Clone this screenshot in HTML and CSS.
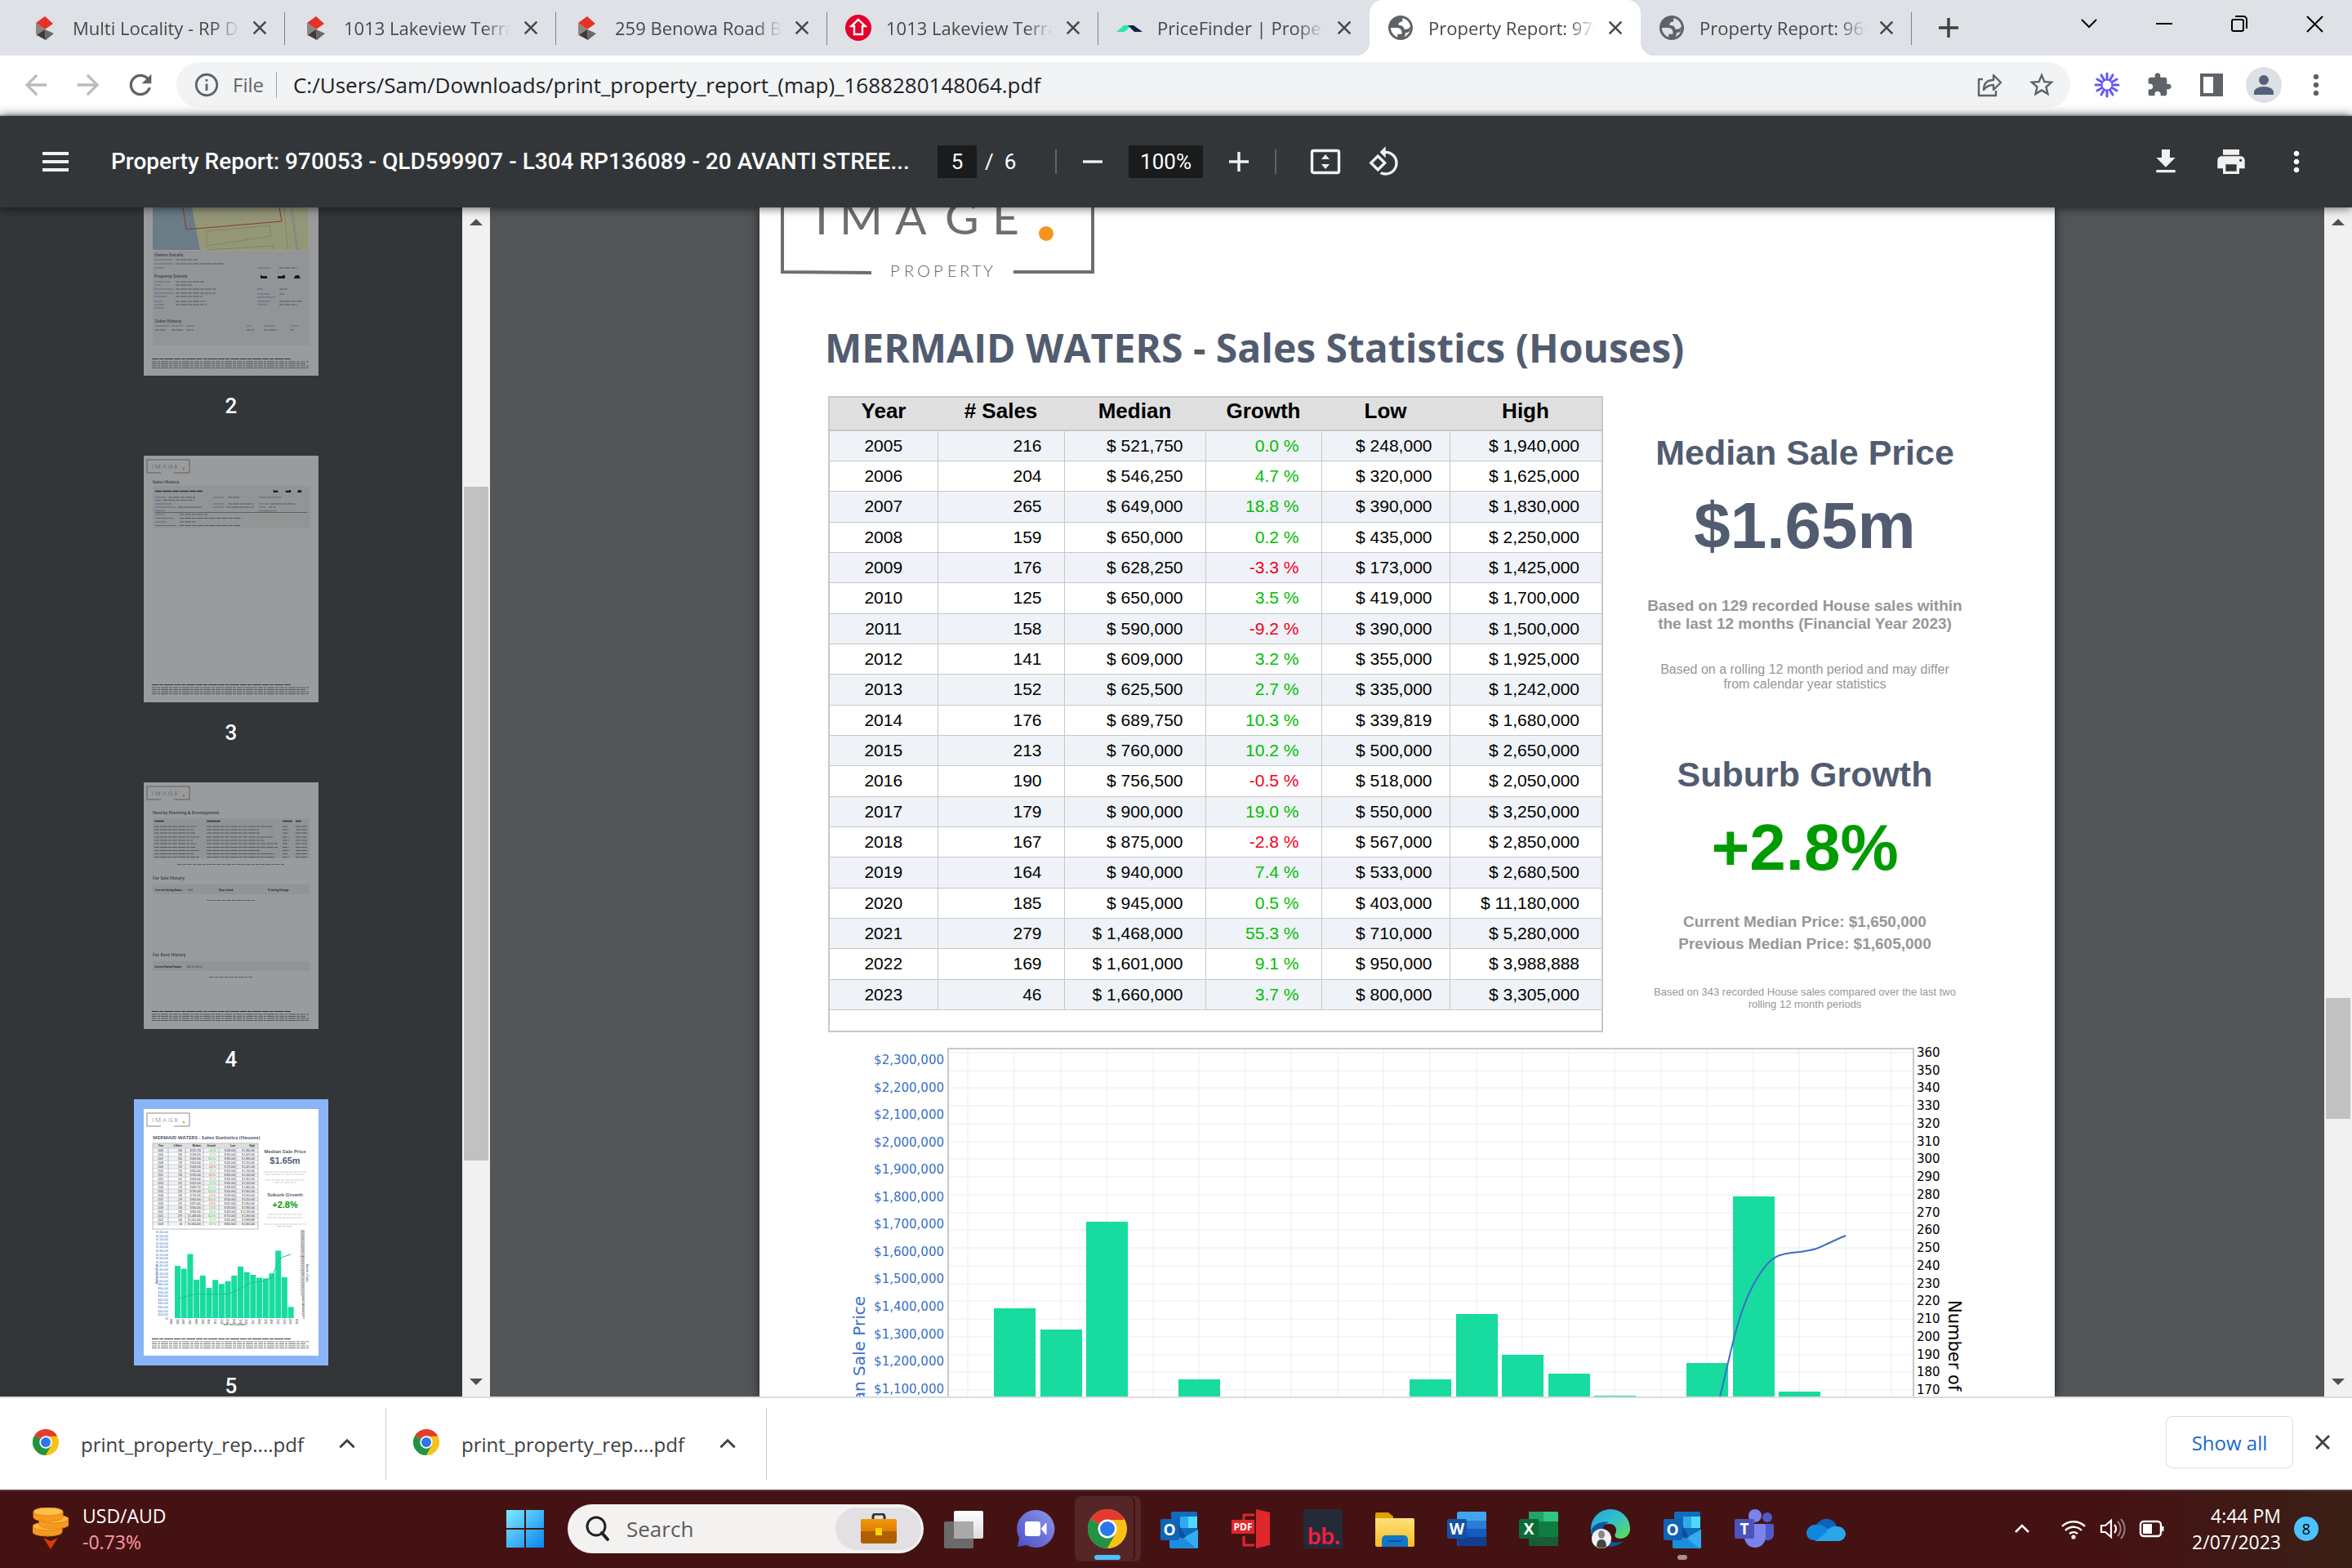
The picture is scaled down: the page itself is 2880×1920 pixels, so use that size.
FILE: index.html
```html
<!DOCTYPE html>
<html lang="en">
<head>
<meta charset="utf-8">
<title>Property Report</title>
<link rel="stylesheet" href="styles.css">
</head>
<body>
<svg class="sprite" aria-hidden="true">
  <defs>
    <linearGradient id="g-win" x1="0" y1="0" x2="1" y2="1"><stop offset="0" stop-color="#7eebff"/><stop offset="1" stop-color="#0a84f0"/></linearGradient>
    <linearGradient id="g-case" x1="0" y1="0" x2="0" y2="1"><stop offset="0" stop-color="#f09a0c"/><stop offset="1" stop-color="#e07d00"/></linearGradient>
    <linearGradient id="g-chat" x1="1" y1="0" x2="0" y2="1"><stop offset="0" stop-color="#8f97ee"/><stop offset="1" stop-color="#4a4fc4"/></linearGradient>
    <linearGradient id="g-folder" x1="0" y1="0" x2="0" y2="1"><stop offset="0" stop-color="#ffe07a"/><stop offset="1" stop-color="#f9bd23"/></linearGradient>
    <linearGradient id="g-edge" x1="0" y1="0" x2="1" y2="1"><stop offset="0" stop-color="#1fa7e0"/><stop offset=".5" stop-color="#35c1c8"/><stop offset="1" stop-color="#66e04a"/></linearGradient>
    <linearGradient id="g-white" x1="0" y1="0" x2="0" y2="1"><stop offset="0" stop-color="#fff"/><stop offset="1" stop-color="#dcdcdc"/></linearGradient>
  </defs>
  <symbol id="i-rp" viewBox="0 0 32 32"><path d="M16 2l10 9-10 7L5 10z" fill="#e63227"/><path d="M5 10l11 8-10 8-1-3z" fill="#8a8685"/><path d="M16 18l-10 7 11 6z" fill="#3d3a39"/><path d="M16 18l11 5-10 8z" fill="#6d6968"/></symbol>
  <symbol id="i-rea" viewBox="0 0 32 32"><circle cx="16" cy="16" r="16" fill="#e4002b"/><path d="M16 6l8.500 8h-3.500v10H11V14H7.500z" fill="none" stroke="#fff" stroke-width="2.400"/></symbol>
  <symbol id="i-pf" viewBox="0 0 32 32"><path d="M0 21L9 13h10l-9 8z" fill="#2ee6a8"/><path d="M14 13h7l11 8H22z" fill="#0f2548"/></symbol>
  <symbol id="i-globe" viewBox="0 0 24 24"><path fill="#5f6368" d="M12 2C6.480 2 2 6.480 2 12s4.480 10 10 10 10-4.480 10-10S17.520 2 12 2zM4 12h4.400c3.400 0 4.900 1.700 4.600 5.100H9.500v2.500C6.300 18.500 4 15.500 4 12zm10.800 7.500c.9-1 1.200-2.300 1.200-3.500 3 0 3.600-1 3.600-3h.3c-.4 3.100-2.400 5.500-5.100 6.500zM20 11c-1 2-3.500 2.400-5.100 2.200-.3-2.500-1.900-3.100-4.500-3.200-.3-2.400 1.300-3 3.100-3V4.200C17 4.800 19.500 7.500 20 11z"/></symbol>
  <symbol id="i-x" viewBox="0 0 24 24"><path d="M4 4l16 16M20 4L4 20" fill="none" stroke="currentColor" stroke-width="2.800"/></symbol>
  <symbol id="i-back" viewBox="0 0 24 24"><path fill="currentColor" d="M20 11H7.830l5.590-5.590L12 4l-8 8 8 8 1.410-1.410L7.830 13H20v-2z"/></symbol>
  <symbol id="i-fwd" viewBox="0 0 24 24"><path fill="currentColor" d="M4 11h12.170l-5.590-5.590L12 4l8 8-8 8-1.410-1.410L16.170 13H4v-2z"/></symbol>
  <symbol id="i-reload" viewBox="0 0 24 24"><path fill="currentColor" d="M17.650 6.350C16.200 4.900 14.210 4 12 4c-4.420 0-7.990 3.580-7.990 8s3.570 8 7.990 8c3.730 0 6.840-2.550 7.730-6h-2.080c-.82 2.330-3.040 4-5.650 4-3.310 0-6-2.690-6-6s2.690-6 6-6c1.660 0 3.140.69 4.220 1.780L13 11h7V4l-2.350 2.350z"/></symbol>
  <symbol id="i-info" viewBox="0 0 24 24"><path fill="currentColor" d="M11 17h2v-6h-2v6zm1-15C6.480 2 2 6.480 2 12s4.480 10 10 10 10-4.480 10-10S17.520 2 12 2zm0 18c-4.410 0-8-3.590-8-8s3.590-8 8-8 8 3.590 8 8-3.590 8-8 8zM11 9h2V7h-2v2z"/></symbol>
  <symbol id="i-share" viewBox="0 0 32 32"><path fill="none" stroke="currentColor" stroke-width="2.400" d="M8 9H3v20h21v-6M9 22c0-8 4-12 12-12V4l9 9-9 9v-6c-6 0-9 2-12 6z" stroke-linejoin="round"/></symbol>
  <symbol id="i-star" viewBox="0 0 24 24"><path fill="currentColor" d="M22 9.240l-7.190-.62L12 2 9.190 8.630 2 9.240l5.460 4.730L5.820 21 12 17.270 18.180 21l-1.630-7.030L22 9.240zM12 15.400l-3.760 2.270 1-4.280-3.320-2.880 4.380-.38L12 6.100l1.710 4.040 4.380.38-3.320 2.880 1 4.280L12 15.400z"/></symbol>
  <symbol id="i-burst" viewBox="0 0 32 32"><g stroke="#6558f5" stroke-width="3" stroke-linecap="round"><path d="M16 2v7M16 23v7M2 16h7M23 16h7M9 3.900l3.500 6M19.500 22.100l3.500 6M3.900 9l6 3.500M22.100 19.500l6 3.500M3.900 23l6-3.500M22.100 12.500l6-3.500M9 28.100l3.500-6M19.500 9.900l3.500-6"/></g><circle cx="16" cy="16" r="6.500" fill="none" stroke="#6558f5" stroke-width="2"/></symbol>
  <symbol id="i-ext" viewBox="0 0 24 24"><path fill="currentColor" d="M20.500 11H19V7c0-1.100-.9-2-2-2h-4V3.500C13 2.120 11.880 1 10.500 1S8 2.120 8 3.500V5H4c-1.100 0-1.990.9-1.990 2v3.800H3.500c1.490 0 2.700 1.210 2.700 2.700s-1.210 2.700-2.700 2.700H2V20c0 1.100.9 2 2 2h3.800v-1.500c0-1.490 1.210-2.700 2.700-2.700 1.490 0 2.700 1.210 2.700 2.700V22H17c1.100 0 2-.9 2-2v-4h1.500c1.380 0 2.500-1.120 2.500-2.500S21.880 11 20.500 11z"/></symbol>
  <symbol id="i-panel" viewBox="0 0 32 32"><path fill="currentColor" fill-rule="evenodd" d="M2 2h28v28H2zM6 6v20h12V6z"/></symbol>
  <symbol id="i-person" viewBox="0 0 48 48"><circle cx="24" cy="24" r="22" fill="#dde0e6"/><circle cx="24" cy="18" r="6" fill="#53627a"/><path d="M12 36v-3c0-4 5-7 12-7s12 3 12 7v3z" fill="#53627a"/></symbol>
  <symbol id="i-dots" viewBox="0 0 24 24"><path fill="currentColor" d="M12 8c1.100 0 2-.9 2-2s-.9-2-2-2-2 .9-2 2 .9 2 2 2zm0 2c-1.100 0-2 .9-2 2s.9 2 2 2 2-.9 2-2-.9-2-2-2zm0 6c-1.100 0-2 .9-2 2s.9 2 2 2 2-.9 2-2-.9-2-2-2z"/></symbol>
  <symbol id="i-up" viewBox="0 0 24 24"><path d="M4 16l8-8 8 8" fill="none" stroke="currentColor" stroke-width="2.600"/></symbol>
  <symbol id="i-chrome" viewBox="0 0 48 48"><circle cx="24" cy="24" r="24" fill="#fbc116"/><path d="M24 24L3.200 12A24 24 0 0 1 44.800 12z" fill="#e33b2e"/><path d="M3.200 12A24 24 0 0 0 24 48L34.400 30 24 24z" fill="#229342"/><path d="M24 13h20.800A24 24 0 0 1 24 48l10-18z" fill="#fbc116"/><circle cx="24" cy="24" r="11.500" fill="#fff"/><circle cx="24" cy="24" r="9" fill="#2b76ea"/></symbol>
  <symbol id="i-outlook" viewBox="0 0 48 48"><rect x="14" y="3" width="32" height="30" rx="2" fill="#0f6cbd"/><rect x="14" y="9" width="11" height="14" fill="#1468b8"/><rect x="25" y="9" width="10" height="14" fill="#32a9ee"/><rect x="35" y="9" width="11" height="14" fill="#50d9ff"/><path d="M12 26l17 9 18-10v21a2 2 0 0 1-2 2H14a2 2 0 0 1-2-2z" fill="#1c8fdc"/><path d="M47 25v21a2 2 0 0 1-2 2L29 35z" fill="#33adf0"/><path d="M24 20l8 14-4 2-6-3z" fill="#0b4f9c"/><rect x="1" y="12" width="23" height="26" rx="2" fill="#0f64b8"/><text x="12" y="32" class="tile-letter">O</text></symbol>
  <symbol id="t-logo" viewBox="0 0 54 18"><path d="M18 17H1V1h52v16H34" fill="none" stroke="#888" stroke-width="1"/><text x="7" y="12" class="mini mini-logo">I M A G E</text><circle cx="46" cy="12" r="1.200" fill="#f7941d"/></symbol>
  <symbol id="t-foot" viewBox="0 0 194 14"><path d="M0 1.500h171" stroke="#333" stroke-width="1.200" stroke-dasharray="8 1 5 1 11 1"/><path d="M0 5h193M0 7.500h188M0 10h193M0 12.500h193" stroke="#777" stroke-width="1" stroke-dasharray="6 1 3 1 9 1 4 1"/></symbol>
  <symbol id="t-beds" viewBox="0 0 56 6"><path d="M1 0v5h8V2H3zM22 2v3h9V1h-3v1zM42 4l2-3h4l2 4h-8z" fill="#000"/></symbol>
</svg>

<header class="tabs">
  <div class="tab"><svg class="ic32"><use href="#i-rp"/></svg><span class="tab-title">Multi Locality - RP Data</span><button class="tab-x" aria-label="Close tab"><svg><use href="#i-x"/></svg></button></div>
  <div class="tab"><svg class="ic32"><use href="#i-rp"/></svg><span class="tab-title">1013 Lakeview Terrace</span><button class="tab-x" aria-label="Close tab"><svg><use href="#i-x"/></svg></button></div>
  <div class="tab"><svg class="ic32"><use href="#i-rp"/></svg><span class="tab-title">259 Benowa Road Benowa</span><button class="tab-x" aria-label="Close tab"><svg><use href="#i-x"/></svg></button></div>
  <div class="tab"><svg class="ic32"><use href="#i-rea"/></svg><span class="tab-title">1013 Lakeview Terrace</span><button class="tab-x" aria-label="Close tab"><svg><use href="#i-x"/></svg></button></div>
  <div class="tab tab-before"><svg class="ic32"><use href="#i-pf"/></svg><span class="tab-title">PriceFinder | Property</span><button class="tab-x" aria-label="Close tab"><svg><use href="#i-x"/></svg></button></div>
  <div class="tab tab-active"><svg class="ic32 globe"><use href="#i-globe"/></svg><span class="tab-title">Property Report: 970053</span><button class="tab-x" aria-label="Close tab"><svg><use href="#i-x"/></svg></button></div>
  <div class="tab"><svg class="ic32 globe"><use href="#i-globe"/></svg><span class="tab-title">Property Report: 969</span><button class="tab-x" aria-label="Close tab"><svg><use href="#i-x"/></svg></button></div>
  <button class="new-tab" aria-label="New tab"><svg viewBox="0 0 24 24"><path d="M12 0v24M0 12h24" stroke="#3c4043" stroke-width="3.400"/></svg></button>
  <div class="win">
    <button aria-label="Search tabs"><svg viewBox="0 0 24 24"><path d="M3 7l9 9 9-9" fill="none" stroke="#000" stroke-width="2"/></svg></button>
    <button aria-label="Minimize"><svg viewBox="0 0 24 24"><path d="M2 12h20" stroke="#000" stroke-width="2"/></svg></button>
    <button aria-label="Restore"><svg viewBox="0 0 24 24"><path d="M3 9a2 2 0 0 1 2-2h10a2 2 0 0 1 2 2v10a2 2 0 0 1-2 2H5a2 2 0 0 1-2-2zM7 3h10a4 4 0 0 1 4 4v11" fill="none" stroke="#000" stroke-width="2"/></svg></button>
    <button aria-label="Close"><svg viewBox="0 0 24 24"><path d="M3 3l19 19M22 3L3 22" stroke="#000" stroke-width="2"/></svg></button>
  </div>
</header>

<nav class="toolbar">
  <button class="nav-btn off" aria-label="Back"><svg><use href="#i-back"/></svg></button>
  <button class="nav-btn off" aria-label="Forward"><svg><use href="#i-fwd"/></svg></button>
  <button class="nav-btn" aria-label="Reload"><svg><use href="#i-reload"/></svg></button>
  <div class="omnibox">
    <svg class="info"><use href="#i-info"/></svg>
    <label class="scheme" for="url">File</label>
    <input id="url" class="url" type="text" value="C:/Users/Sam/Downloads/print_property_report_(map)_1688280148064.pdf">
    <button class="omni-btn" aria-label="Share"><svg><use href="#i-share"/></svg></button>
    <button class="omni-btn star" aria-label="Bookmark"><svg><use href="#i-star"/></svg></button>
  </div>
  <div class="ext">
    <button aria-label="Loom"><svg><use href="#i-burst"/></svg></button>
    <button aria-label="Extensions"><svg><use href="#i-ext"/></svg></button>
    <button aria-label="Side panel"><svg><use href="#i-panel"/></svg></button>
    <button class="avatar" aria-label="Profile"><svg><use href="#i-person"/></svg></button>
    <button class="more" aria-label="Menu"><svg><use href="#i-dots"/></svg></button>
  </div>
</nav>

<section class="pdfbar">
  <button class="burger" aria-label="Menu"><svg viewBox="0 0 32 24"><path d="M0 2h32M0 12h32M0 22h32" stroke="#f1f1f1" stroke-width="4"/></svg></button>
  <h1 class="doc-title">Property Report: 970053 - QLD599907 - L304 RP136089 - 20 AVANTI STREE...</h1>
  <input class="page-no" type="text" value="5" aria-label="Page number">
  <span class="page-of">/&nbsp; 6</span>
  <span class="rule"></span>
  <button class="sign" aria-label="Zoom out"><svg viewBox="0 0 24 24"><path d="M0 12h24" stroke="#f1f1f1" stroke-width="3.400"/></svg></button>
  <input class="zoom" type="text" value="100%" aria-label="Zoom">
  <button class="sign" aria-label="Zoom in"><svg viewBox="0 0 24 24"><path d="M0 12h24M12 0v24" stroke="#f1f1f1" stroke-width="3.400"/></svg></button>
  <span class="rule"></span>
  <button class="tool" aria-label="Fit to page"><svg viewBox="0 0 40 40"><rect x="3.500" y="6.500" width="33" height="27" rx="2" fill="none" stroke="#f1f1f1" stroke-width="3.400"/><path d="M20 11l5 6H15zM20 29l5-6H15z" fill="#f1f1f1"/></svg></button>
  <button class="tool" aria-label="Rotate"><svg viewBox="0 0 24 24"><path fill="#f1f1f1" d="M7.340 6.410L.86 12.900l6.490 6.480 6.490-6.480-6.500-6.490zM3.690 12.900l3.660-3.660L11 12.900l-3.660 3.660-3.650-3.660zm15.670-6.260C17.610 4.880 15.300 4 13 4V.76L8.760 5 13 9.240V6c1.790 0 3.580.68 4.950 2.050 2.730 2.730 2.730 7.170 0 9.900C16.580 19.320 14.790 20 13 20c-.97 0-1.940-.21-2.840-.61l-1.490 1.490C10.020 21.620 11.510 22 13 22c2.300 0 4.610-.88 6.360-2.640 3.520-3.510 3.520-9.210 0-12.720z"/></svg></button>
  <div class="pdf-right">
    <button class="tool" aria-label="Download"><svg viewBox="0 0 24 24"><path fill="#f1f1f1" d="M19 9h-4V3H9v6H5l7 7 7-7zM5 18v2h14v-2H5z"/></svg></button>
    <button class="tool" aria-label="Print"><svg viewBox="0 0 24 24"><path fill="#f1f1f1" d="M19 8H5c-1.660 0-3 1.340-3 3v6h4v4h12v-4h4v-6c0-1.660-1.340-3-3-3zm-3 11H8v-5h8v5zm3-7c-.55 0-1-.45-1-1s.45-1 1-1 1 .45 1 1-.45 1-1 1zm-1-9H6v4h12V3z"/></svg></button>
    <button class="tool light" aria-label="More"><svg><use href="#i-dots"/></svg></button>
  </div>
</section>

<main class="viewer">
  <aside class="thumbs">
    <figure class="thumb">
      <svg class="sheet" viewBox="0 0 214 206" width="214" height="206">
        <rect width="214" height="206" fill="#fff"/>
        <rect x="11" width="190" height="52" fill="#f6f7b4"/><path d="M11 0h48l10 52H11z" fill="#a2c2d2"/>
        <path d="M48 0l4 27 117-10-3-17" fill="none" stroke="#d33" stroke-width="1"/><path d="M77 29l77-7 2 13-79 12zM172 0l4 52M77 52l81-5v5" fill="none" stroke="#cccf98"/><path d="M181 0l7 52" stroke="#dadada" stroke-width="3"/>
        <rect x="11" y="53" width="192" height="116" fill="#f2f2f2"/>
        <text x="13" y="60" class="mini mini-h">Owner Details</text><text x="13" y="86" class="mini mini-h">Property Details</text><text x="14" y="141" class="mini mini-h">Sales History</text>
        <path d="M13 64h22M13 69h22M13 74h12M139 74h17M13 91h20M13 95h8M13 100h24M13 105h24M13 109h15M13 115h10M13 119h12M13 123h12M139 100h7M139 106h16M139 110h22M139 115h16M139 119h12M14 145h17M34 145h14M52 145h10M126 145h6M147 145h14M180 145h10" stroke="#8c9dc8" stroke-width="1"/>
        <path d="M39 64h27M39 69h60M166 74h22M39 91h36M39 95h21M39 100h51M39 105h49M39 109h33M39 115h37M39 119h38M166 100h10M166 106h7M166 115h28M166 119h22M14 150h13M34 150h15M52 150h9M126 150h9M147 150h17M180 150h4" stroke="#777" stroke-width="1" stroke-dasharray="5 1 8 1"/>
        <use href="#t-beds" x="142" y="82" width="56" height="6"/>
        <use href="#t-foot" x="10" y="184" width="194" height="14"/>
      </svg>
      <figcaption>2</figcaption>
    </figure>
    <figure class="thumb">
      <svg class="sheet" viewBox="0 0 214 302" width="214" height="302">
        <rect width="214" height="302" fill="#fff"/>
        <use href="#t-logo" x="3" y="3" width="54" height="20"/>
        <text x="11" y="34" class="mini mini-h">Sales History</text>
        <rect x="11" y="37" width="193" height="52" fill="#f2f2f2"/>
        <path d="M14 43.500h58" stroke="#333" stroke-width="1.500" stroke-dasharray="8 1 11 1"/>
        <path d="M14 51h14M14 54.500h7M14 59h20M14 63h25M14 67.500h12M14 72h12M14 76.500h22M14 81h14M14 85.500h26M85 51h13M85 59h14M85 63h14M141 51h28M141 59h12M141 63h8M141 67.500h22" stroke="#8c9dc8" stroke-width="1"/>
        <path d="M30 51h33M24 54.500h38M42 63h30M44 72h34M44 76.500h76M44 81h20M44 85.500h74M103 51h15M103 59h32M101 63h34M155 59h31M153 63h9" stroke="#777" stroke-width="1" stroke-dasharray="5 1 8 1"/>
        <path d="M14 69.500h186" stroke="#888" stroke-width="1"/>
        <use href="#t-beds" x="158" y="41" width="40" height="5"/>
        <use href="#t-foot" x="10" y="279" width="194" height="14"/>
      </svg>
      <figcaption>3</figcaption>
    </figure>
    <figure class="thumb">
      <svg class="sheet" viewBox="0 0 214 302" width="214" height="302">
        <rect width="214" height="302" fill="#fff"/>
        <use href="#t-logo" x="3" y="3" width="54" height="20"/>
        <text x="11" y="39" class="mini mini-h">Nearby Planning &amp; Development</text>
        <rect x="11" y="44" width="192" height="49" fill="#f0f0f0"/>
        <path d="M13 47.500h12M77 47.500h17M170 47.500h12M186 47.500h7" stroke="#333" stroke-width="1.500"/>
        <path d="M13 54h52M13 58h48M13 62h50M13 67h55M13 71h47M13 75h52M13 79.500h50M13 83.500h55M13 87.500h48M13 91.500h55M77 54h81M77 58h64M77 62h66M77 67h81M77 71h70M77 75h87M77 79.500h88M77 83.500h66M77 87.500h84M77 91.500h84M170 54h7M170 58h8M170 62h7M170 67h8M170 71h8M170 75h7M170 79.500h8M170 83.500h8M170 87.500h7M170 91.500h8M186 54h14M186 58h14M186 62h14M186 67h14M186 71h14M186 75h14M186 79.500h14M186 83.500h14M186 87.500h14M186 91.500h14" stroke="#777" stroke-width="1" stroke-dasharray="6 1 9 1 4 1"/>
        <path d="M41 100.500h132M77 144.500h59M80 238.500h53" stroke="#888" stroke-width="1" stroke-dasharray="6 1 4 1"/>
        <text x="11" y="119" class="mini mini-h">For Sale History</text>
        <rect x="11" y="125" width="192" height="12" fill="#f0f0f0"/>
        <text x="14" y="133" class="mini mini-b">Current Listing Status:</text><text x="54" y="133" class="mini mini-r">Sold</text><text x="92" y="133" class="mini mini-b">Days Listed:</text><text x="152" y="133" class="mini mini-b">% Listing Change:</text>
        <text x="11" y="213" class="mini mini-h">For Rent History</text>
        <rect x="11" y="219" width="192" height="12" fill="#f0f0f0"/>
        <text x="13" y="227" class="mini mini-b">Current Rental Status:</text><text x="53" y="227" class="mini mini-r">Not For Rent</text>
        <use href="#t-foot" x="10" y="279" width="194" height="14"/>
      </svg>
      <figcaption>4</figcaption>
    </figure>
    <figure class="thumb thumb-on">
      <svg class="sheet" id="mini" viewBox="0 0 214 302" width="214" height="302">
        <rect width="214" height="302" fill="#fff"/>
        <use href="#t-logo" x="3" y="3" width="54" height="20"/>
        <text x="11" y="37" class="mini mini-t">MERMAID WATERS - Sales Statistics (Houses)</text>
        <text x="173" y="54" class="mini mini-s">Median Sale Price</text><text x="173" y="67" class="mini mini-n">$1.65m</text>
        <text x="173" y="107" class="mini mini-s">Suburb Growth</text><text x="173" y="121" class="mini mini-n up">+2.8%</text>
        <path d="M147 77h52M149 80h48M149 87h48M160 90h26M152 129h42M151 133h44M147 141h52M163 143.500h20" stroke="#ccc" stroke-width="1" stroke-dasharray="6 1 4 1"/>
        <use href="#t-foot" x="10" y="280" width="194" height="14"/>
      </svg>
      <figcaption>5</figcaption>
    </figure>
  </aside>
  <div class="scroll scroll-thumbs"><i class="arrow-up"></i><i class="grip"></i><i class="arrow-down"></i></div>

  <div class="stage">
    <article class="page">
      <svg class="logo" viewBox="0 0 390 90" width="390" height="90" role="img" aria-label="Image Property">
        <path d="M2 0v79l109 1M285 79h97V0" fill="none" stroke="#6d6e70" stroke-width="4"/>
        <text class="logo-a" y="33" x="42 72 140 201 259">IMAGE</text>
        <circle cx="325" cy="32" r="9" fill="#f7941d"/>
        <text class="logo-b" y="85" x="134 151 167 187 204 219 234 248">PROPERTY</text>
      </svg>
      <h2 class="heading">MERMAID WATERS - Sales Statistics (Houses)</h2>
      <div class="cols">
        <table class="stats" id="stats">
          <colgroup><col class="c1"><col class="c2"><col class="c3"><col class="c4"><col class="c5"><col class="c6"></colgroup>
          <thead><tr><th>Year</th><th># Sales</th><th>Median</th><th>Growth</th><th>Low</th><th>High</th></tr></thead>
          <tbody>
            <tr><td>2005</td><td>216</td><td>$ 521,750</td><td>0.0 %</td><td>$ 248,000</td><td>$ 1,940,000</td></tr>
            <tr><td>2006</td><td>204</td><td>$ 546,250</td><td>4.7 %</td><td>$ 320,000</td><td>$ 1,625,000</td></tr>
            <tr><td>2007</td><td>265</td><td>$ 649,000</td><td>18.8 %</td><td>$ 390,000</td><td>$ 1,830,000</td></tr>
            <tr><td>2008</td><td>159</td><td>$ 650,000</td><td>0.2 %</td><td>$ 435,000</td><td>$ 2,250,000</td></tr>
            <tr><td>2009</td><td>176</td><td>$ 628,250</td><td class="neg">-3.3 %</td><td>$ 173,000</td><td>$ 1,425,000</td></tr>
            <tr><td>2010</td><td>125</td><td>$ 650,000</td><td>3.5 %</td><td>$ 419,000</td><td>$ 1,700,000</td></tr>
            <tr><td>2011</td><td>158</td><td>$ 590,000</td><td class="neg">-9.2 %</td><td>$ 390,000</td><td>$ 1,500,000</td></tr>
            <tr><td>2012</td><td>141</td><td>$ 609,000</td><td>3.2 %</td><td>$ 355,000</td><td>$ 1,925,000</td></tr>
            <tr><td>2013</td><td>152</td><td>$ 625,500</td><td>2.7 %</td><td>$ 335,000</td><td>$ 1,242,000</td></tr>
            <tr><td>2014</td><td>176</td><td>$ 689,750</td><td>10.3 %</td><td>$ 339,819</td><td>$ 1,680,000</td></tr>
            <tr><td>2015</td><td>213</td><td>$ 760,000</td><td>10.2 %</td><td>$ 500,000</td><td>$ 2,650,000</td></tr>
            <tr><td>2016</td><td>190</td><td>$ 756,500</td><td class="neg">-0.5 %</td><td>$ 518,000</td><td>$ 2,050,000</td></tr>
            <tr><td>2017</td><td>179</td><td>$ 900,000</td><td>19.0 %</td><td>$ 550,000</td><td>$ 3,250,000</td></tr>
            <tr><td>2018</td><td>167</td><td>$ 875,000</td><td class="neg">-2.8 %</td><td>$ 567,000</td><td>$ 2,850,000</td></tr>
            <tr><td>2019</td><td>164</td><td>$ 940,000</td><td>7.4 %</td><td>$ 533,000</td><td>$ 2,680,500</td></tr>
            <tr><td>2020</td><td>185</td><td>$ 945,000</td><td>0.5 %</td><td>$ 403,000</td><td>$ 11,180,000</td></tr>
            <tr><td>2021</td><td>279</td><td>$ 1,468,000</td><td>55.3 %</td><td>$ 710,000</td><td>$ 5,280,000</td></tr>
            <tr><td>2022</td><td>169</td><td>$ 1,601,000</td><td>9.1 %</td><td>$ 950,000</td><td>$ 3,988,888</td></tr>
            <tr><td>2023</td><td>46</td><td>$ 1,660,000</td><td>3.7 %</td><td>$ 800,000</td><td>$ 3,305,000</td></tr>
          </tbody>
          <tfoot><tr><td colspan="6"></td></tr></tfoot>
        </table>
        <div class="side">
          <h3>Median Sale Price</h3>
          <p class="big">$1.65m</p>
          <p class="note-b">Based on 129 recorded House sales within<br>the last 12 months (Financial Year 2023)</p>
          <p class="note">Based on a rolling 12 month period and may differ<br>from calendar year statistics</p>
          <h3 class="second">Suburb Growth</h3>
          <p class="big up">+2.8%</p>
          <p class="note-b prices">Current Median Price: $1,650,000<br>Previous Median Price: $1,605,000</p>
          <p class="note-s">Based on 343 recorded House sales compared over the last two<br>rolling 12 month periods</p>
        </div>
      </div>
      <svg class="chart" id="chart" viewBox="0 0 1400 440" width="1400" height="440" role="img" aria-label="Median sale price and number of sales by year"></svg>
    </article>
  </div>
  <div class="scroll scroll-page"><i class="arrow-up"></i><i class="grip"></i><i class="arrow-down"></i></div>
</main>

<section class="downloads">
  <div class="dl"><svg class="ic32"><use href="#i-chrome"/></svg><a href="#">print_property_rep....pdf</a><button aria-label="Options"><svg><use href="#i-up"/></svg></button></div>
  <div class="dl"><svg class="ic32"><use href="#i-chrome"/></svg><a href="#">print_property_rep....pdf</a><button aria-label="Options"><svg><use href="#i-up"/></svg></button></div>
  <button class="show-all">Show all</button>
  <button class="dl-x" aria-label="Close downloads"><svg><use href="#i-x"/></svg></button>
</section>

<footer class="taskbar">
  <div class="widget">
    <svg viewBox="0 0 44 52" width="44" height="52"><g stroke="#e58a12" stroke-width="1"><path d="M0 23v7a18 5 0 0 0 36 0v-7z" fill="#f59a20"/><ellipse cx="18" cy="23" rx="18" ry="5" fill="#ffb63f"/><path d="M8 14v7a18 5 0 0 0 36 0v-7z" fill="#f59a20"/><ellipse cx="26" cy="14" rx="18" ry="5" fill="#ffb63f"/><path d="M1 5v7a18 5 0 0 0 36 0V5z" fill="#f8981d"/><ellipse cx="19" cy="5" rx="18" ry="5" fill="#ffc04d"/></g><path d="M13 37l9 4 9-4-9 14z" fill="#d83b01"/></svg>
    <div class="quote"><span>USD/AUD</span><span class="fall">-0.73%</span></div>
  </div>
  <div class="center">
    <button class="start" aria-label="Start"><svg viewBox="0 0 46 46"><path d="M0 0h22v22H0zM24 0h22v22H24zM0 24h22v22H0zM24 24h22v22H24z" fill="url(#g-win)"/></svg></button>
    <div class="search">
      <svg viewBox="0 0 32 32" class="lens"><circle cx="15" cy="13" r="11" fill="none" stroke="#222" stroke-width="3"/><path d="M22 21l7 8" stroke="#222" stroke-width="4" stroke-linecap="round"/></svg>
      <input type="text" placeholder="Search" aria-label="Search">
      <span class="case"><svg viewBox="0 0 44 38"><path d="M15 7V4a3 3 0 0 1 3-3h8a3 3 0 0 1 3 3v3" fill="none" stroke="#333" stroke-width="3"/><rect y="7" width="44" height="30" rx="3" fill="#b05f00"/><path d="M3 7h38a3 3 0 0 1 3 3v12H0V10a3 3 0 0 1 3-3z" fill="url(#g-case)"/><rect x="18" y="18" width="8" height="9" fill="#ffd500"/></svg></span>
    </div>
    <div class="apps">
      <button aria-label="Task view"><svg viewBox="0 0 48 48"><rect x="12" y="2" width="36" height="34" rx="2" fill="url(#g-white)"/><rect x="0" y="15" width="36" height="33" rx="2" fill="#6a6a6a"/><path d="M12 15h24v21H12z" fill="#aaa"/></svg></button>
      <button aria-label="Chat"><svg viewBox="0 0 48 48"><path d="M24 1a23 23 0 1 1-11 43L2 46l2-11A23 23 0 0 1 24 1z" fill="url(#g-chat)"/><rect x="11" y="15" width="19" height="18" rx="3" fill="#fff"/><path d="M31 24l6-7v14z" fill="#fff" stroke="#fff"/></svg></button>
      <button class="app-on" aria-label="Chrome"><svg><use href="#i-chrome"/></svg></button>
      <button aria-label="Outlook"><svg><use href="#i-outlook"/></svg></button>
      <button aria-label="PDF"><svg viewBox="0 0 48 48"><path d="M30 0l17 4v40l-17 4z" fill="#e0272c"/><path d="M28 7H15v7M15 33v11h13" fill="none" stroke="#e0272c" stroke-width="3"/><rect x="0" y="13" width="28" height="17" fill="#e0272c"/><text x="14" y="26" class="tile-letter small">PDF</text></svg></button>
      <button aria-label="bb."><svg viewBox="0 0 48 48"><rect width="48" height="48" fill="#252a38"/><text x="25" y="43" class="bb">bb.</text></svg></button>
      <button aria-label="File Explorer"><svg viewBox="0 0 48 48"><path d="M0 6a2 2 0 0 1 2-2h14l6 5v12H0z" fill="#dfa100"/><path d="M0 11h46a2 2 0 0 1 2 2v31a2 2 0 0 1-2 2H2a2 2 0 0 1-2-2z" fill="url(#g-folder)"/><path d="M8 46V37a5 5 0 0 1 5-5h22a5 5 0 0 1 5 5v9z" fill="#1177c8"/><path d="M16 39h16" stroke="#0b5394" stroke-width="2"/></svg></button>
      <button aria-label="Word"><svg viewBox="0 0 48 48"><rect x="12" y="3" width="36" height="42" rx="2" fill="#185abd"/><path d="M14 3h32a2 2 0 0 1 2 2v9H12V5z" fill="#41a5ee"/><path d="M12 14h36v10H12z" fill="#2b7cd3"/><path d="M12 34h36v9a2 2 0 0 1-2 2H14z" fill="#103f91"/><rect y="12" width="24" height="24" rx="2" fill="#1550a8"/><text x="12" y="31" class="tile-letter">W</text></svg></button>
      <button aria-label="Excel"><svg viewBox="0 0 48 48"><rect x="12" y="3" width="36" height="42" rx="2" fill="#107c41"/><path d="M12 3h18v12H12z" fill="#21a366"/><path d="M30 3h16a2 2 0 0 1 2 2v10H30z" fill="#33c481"/><path d="M30 24h18v10H30z" fill="#107c41"/><path d="M12 34h36v9a2 2 0 0 1-2 2H12z" fill="#185c37"/><rect y="12" width="24" height="24" rx="2" fill="#0c6b37"/><text x="12" y="31" class="tile-letter">X</text></svg></button>
      <button aria-label="Edge"><svg viewBox="0 0 48 48"><path d="M0 24a24 24 0 0 1 48 0c0 8-6 12-12 12-5 0-8-3-6-6 3-5 0-12-7-12C12 18 4 22 0 30z" fill="url(#g-edge)"/><path d="M0 27c2-7 10-13 22-11-6 2-9 8-7 15 3 9 14 12 25 8a24 24 0 0 1-40-12z" fill="#0c59a4"/><circle cx="13" cy="36" r="12" fill="#f2f2f2"/><ellipse cx="13" cy="31" rx="4" ry="5" fill="#888"/><path d="M7 46c0-6 2-9 6-9s6 3 6 9a12 12 0 0 1-12 0z" fill="#444"/></svg></button>
      <button class="app-dot" aria-label="Outlook window"><svg><use href="#i-outlook"/></svg></button>
      <button aria-label="Teams"><svg viewBox="0 0 48 48"><circle cx="40" cy="10" r="6" fill="#5059c9"/><path d="M34 18h12a2 2 0 0 1 2 2v11a7 7 0 0 1-12 5z" fill="#5059c9"/><circle cx="25" cy="8" r="8" fill="#7b83eb"/><path d="M12 18h24a2 2 0 0 1 2 2v14a13 13 0 0 1-26 0z" fill="#7b83eb"/><rect y="12" width="24" height="24" rx="2" fill="#4b53bc"/><text x="12" y="31" class="tile-letter">T</text></svg></button>
      <button aria-label="OneDrive"><svg viewBox="0 0 48 48"><path d="M12 20a13 12 0 0 1 25 1l-12 9z" fill="#0a64b8"/><path d="M11 19c5-1 9 0 12 3l12 7-24 9C2 38 0 33 0 29s4-10 11-10z" fill="#1285dc"/><path d="M24 28c4-6 9-8 13-7 7 0 11 5 11 9 0 5-4 9-9 9H10c5-3 10-6 14-11z" fill="#28a8ea"/></svg></button>
    </div>
  </div>
  <div class="tray">
    <button class="tray-up" aria-label="Hidden icons"><svg><use href="#i-up"/></svg></button>
    <svg viewBox="0 0 32 32" class="ic32"><path d="M2 13a20 20 0 0 1 28 0M6 18a14 14 0 0 1 20 0M11 22a8 8 0 0 1 10 0" fill="none" stroke="#fff" stroke-width="2.400"/><circle cx="16" cy="26" r="2.600" fill="#fff"/></svg>
    <svg viewBox="0 0 32 32" class="ic32"><path d="M2 12h5l7-6v20l-7-6H2z" fill="none" stroke="#fff" stroke-width="2.200"/><path d="M18 11a7 7 0 0 1 0 10" fill="none" stroke="#fff" stroke-width="2.200"/><path d="M22 7a13 13 0 0 1 0 18M26 4a18 18 0 0 1 0 24" fill="none" stroke="#9a7f80" stroke-width="2"/></svg>
    <svg viewBox="0 0 32 32" class="ic32"><rect x="2" y="7" width="25" height="18" rx="4" fill="none" stroke="#fff" stroke-width="2.400"/><rect x="5" y="10" width="11" height="12" fill="#fff"/><path d="M29 13v6" stroke="#fff" stroke-width="3"/></svg>
    <div class="clock"><span>4:44 PM</span><span>2/07/2023</span></div>
    <span class="badge">8</span>
  </div>
</footer>
<script src="chart.js"></script>
</body>
</html>
```
FILE: styles.css
```css
* { box-sizing: border-box; }
html, body { height: 100%; margin: 0; }
body {
  display: flex; flex-direction: column; overflow: hidden;
  font-family: "Open Sans", "Noto Sans", sans-serif; color: #202124; background: #fff;
}
button { display: flex; align-items: center; justify-content: center; padding: 0; border: 0; background: none; color: inherit; font: inherit; flex: none; }
input { border: 0; outline: 0; padding: 0; min-width: 0; background: none; font: inherit; color: inherit; }
h1, h2, h3, p, figure { margin: 0; }
svg { display: block; flex: none; }
.sprite { position: absolute; width: 0; height: 0; }
.ic32 { width: 32px; height: 32px; }

/* tab strip */
.tabs { display: flex; height: 68px; flex: none; padding-left: 17px; background: #dee1e6; }
.tab { position: relative; display: flex; align-items: center; flex: 0 1 332px; min-width: 0; height: 68px; padding: 0 20px 0 22px; color: #45494d; }
.tab::after { content: ""; position: absolute; right: 0; top: 15px; width: 1px; height: 40px; background: #808387; }
.tab-before::after, .tab-active::after { display: none; }
.globe { width: 36px; height: 36px; margin: 0 -2px; }
.tab-title { flex: 1; min-width: 0; margin: 0 14px 0 18px; overflow: hidden; white-space: nowrap; font-size: 22px; line-height: 32px; -webkit-mask-image: linear-gradient(90deg, #000 84%, transparent); mask-image: linear-gradient(90deg, #000 84%, transparent); }
.tab-x, .tab-x svg { width: 22px; height: 22px; }
.tab-active { background: #fff; border-radius: 16px 16px 0 0; }
.tab-active::before { content: ""; position: absolute; left: -16px; right: -16px; bottom: 0; height: 16px; background: radial-gradient(circle at 0 0, transparent 16px, #fff 16px) left / 16px 16px no-repeat, radial-gradient(circle at 100% 0, transparent 16px, #fff 16px) right / 16px 16px no-repeat; }
.new-tab { margin-left: 33px; height: 68px; }
.new-tab svg { width: 24px; height: 24px; }
.win { display: flex; margin-left: auto; height: 58px; }
.win button { width: 92px; }
.win svg { width: 24px; height: 24px; }

/* address bar */
.toolbar { display: flex; align-items: center; height: 74px; flex: none; padding-left: 24px; border-bottom: 2px solid #dadce0; background: #fff; color: #5f6368; }
.nav-btn { width: 64px; height: 56px; }
.nav-btn:first-child { width: 40px; margin-right: -8px; }
.nav-btn:nth-child(2) { margin-left: 20px; }
.nav-btn svg { width: 40px; height: 40px; }
.nav-btn.off { color: #babcbe; }
.omnibox { display: flex; align-items: center; flex: 1; height: 56px; margin-left: 12px; padding: 0 17px 0 20px; border-radius: 28px; background: #f1f3f4; font-size: 26px; }
.info { width: 34px; height: 34px; }
.scheme { margin-left: 15px; padding-right: 15px; border-right: 1px solid #a0a4a8; line-height: 32px; font-size: 24px; }
.url { flex: 1; margin-left: 20px; color: #202124; }
.omni-btn { width: 36px; }
.omni-btn svg { width: 32px; height: 32px; }
.omni-btn.star { margin-left: 28px; }
.omni-btn.star svg { width: 36px; height: 36px; }
.ext { display: flex; align-items: center; padding: 0 12px 0 13px; }
.ext button { width: 64px; }
.ext svg { width: 32px; height: 32px; }
.ext .avatar svg { width: 48px; height: 48px; }
.ext .more svg { width: 40px; height: 40px; }

/* pdf toolbar */
.pdfbar { position: relative; z-index: 1; display: flex; align-items: center; height: 112px; flex: none; padding: 0 48px 0 52px; background: #323639; color: #fff; font-family: Roboto, sans-serif; font-size: 26px; box-shadow: 0 0 12px rgba(0, 0, 0, .7); }
.burger svg { width: 32px; height: 24px; }
.doc-title { flex: 0 1 1012px; min-width: 0; margin-left: 52px; overflow: hidden; white-space: nowrap; font-size: 28px; font-weight: 500; line-height: 40px; }
.page-no, .zoom { height: 40px; flex: none; background: #191b1c; text-align: center; }
.page-no { width: 48px; }
.zoom { width: 91px; margin: 0 32px; }
.page-of { width: 96px; padding-left: 10px; flex: none; }
.rule { width: 2px; height: 30px; flex: none; background: #5f6365; }
.sign { margin-left: 32px; }
.zoom + .sign { margin: 0 32px 0 0; }
.sign svg { width: 24px; height: 24px; }
.tool svg { width: 40px; height: 40px; }
.rule + .tool { margin: 0 32px 0 40px; }
.pdf-right { display: flex; gap: 40px; margin-left: auto; }

/* viewer */
.viewer { display: flex; flex: 1; min-height: 0; border-bottom: 2px solid #dadce0; background: #525659; }
.thumbs { width: 566px; flex: none; overflow: hidden; background: #323639; color: #fff; font: 500 26px/38px Roboto, sans-serif; }
.thumb { display: flex; flex-direction: column; align-items: center; margin-bottom: 42px; }
.thumb .sheet { opacity: .5; }
.thumb figcaption { margin-top: 18px; }
.thumb-on { margin-top: -12px; }
.thumb-on .sheet { box-sizing: content-box; border: 12px solid #8ab4f8; opacity: 1; }
.thumb-on figcaption { margin-top: 6px; }
.scroll { display: flex; flex-direction: column; align-items: center; width: 34px; flex: none; background: #f1f1f1; }
.arrow-up, .arrow-down { width: 0; height: 0; border: 8px solid transparent; }
.arrow-up { margin-top: 6px; border-bottom-color: #505050; }
.arrow-down { margin: auto 0 6px; border-top-color: #505050; }
.grip { width: 30px; background: #c1c1c1; }
.scroll-thumbs .grip { height: 825px; margin-top: 320px; }
.scroll-page .grip { height: 148px; margin-top: 946px; }
.stage { flex: 1; min-width: 0; overflow: hidden; }

/* report page */
.page { width: 1586px; min-height: 100%; margin: 0 auto; background: #fff; box-shadow: 0 0 12px rgba(0, 0, 0, .6); font-family: "Liberation Sans", Arial, sans-serif; }
.logo { margin-left: 26px; }
.logo-a { font: 400 57px Lato, sans-serif; fill: #6d6e70; }
.logo-b { font: 300 20px Lato, sans-serif; fill: #5f6062; }
.heading { margin: 52px 0 29px 80px; font: 700 48px/60px "Open Sans", sans-serif; color: #525c70; }
.cols { display: flex; margin-left: 84px; }
.stats { width: 947px; flex: none; table-layout: fixed; border-collapse: collapse; border: 2px solid #c8c8c8; font-size: 21px; color: #000; }
.c1 { width: 133px; } .c2 { width: 155px; } .c3 { width: 173px; } .c4 { width: 142px; } .c5 { width: 157px; } .c6 { width: 187px; }
.stats th { height: 41px; padding: 0 0 8px; border-bottom: 2px solid #c8c8c8; background: #dfdfdf; font-size: 26px; line-height: 30px; }
.stats td { height: 37px; padding: 0 27px 0 0; border: 1px solid #c8c8c8; text-align: right; line-height: 24px; }
.stats tr:nth-child(3n) td { height: 38px; }
.stats tbody tr:nth-child(odd) { background: #eff2f7; }
.stats td:first-child { padding-right: 0; text-align: center; }
.stats td:nth-child(5) { padding-right: 21px; }
.stats td:nth-child(4) { color: #00c000; }
.stats td.neg { color: #f00018; }
.stats tfoot td { height: 27px; }
.side { width: 440px; margin-left: 27px; padding-top: 44px; text-align: center; color: #979797; }
.side h3 { font-size: 43px; line-height: 50px; color: #525c70; }
.side h3.second { margin-top: 76px; }
.big { margin-top: 19px; font-size: 80px; font-weight: 700; line-height: 92px; color: #525c70; }
.big.up { color: #009b00; }
.note-b { margin-top: 41px; font-size: 19px; font-weight: 700; line-height: 22px; }
.note-b.prices { margin-top: 31px; line-height: 27px; }
.note { margin-top: 36px; font-size: 16px; line-height: 18px; }
.note-s { margin-top: 38px; font-size: 13px; line-height: 15px; }
.chart { margin: 6px 0 0 99px; }
.tick { font: 15px "DejaVu Sans", sans-serif; }
.tick-l { fill: #3a6fc4; text-anchor: end; }
.tick-r { fill: #000; }
.axis { font: 20px "DejaVu Sans", sans-serif; }
.axis.count { font-size: 21px; }
.bar { fill: #18db9f; }
.grid { stroke: #ececec; stroke-width: 1; }
.frame { fill: none; stroke: #c9c9c9; stroke-width: 2; }
.trend { fill: none; stroke: #3f6bc9; stroke-width: 2; }

/* page previews */
.mini { font-family: "Open Sans", sans-serif; fill: #525c70; }
.mini-logo { font-size: 8px; font-weight: 300; }
.mini-h { font-size: 5px; font-weight: 700; }
.mini-t { font-size: 6px; font-weight: 700; }
.mini-b { font-size: 3px; font-weight: 700; fill: #111; }
.mini-r { font-size: 3px; fill: #333; }
.mini-s, .mini-n { font-family: "Liberation Sans", sans-serif; font-weight: 700; text-anchor: middle; }
.mini-s { font-size: 6px; }
.mini-n { font-size: 11px; }
.mini-n.up { fill: #009b00; }
.mini-c { font: 3px "Liberation Sans", sans-serif; text-anchor: end; fill: #222; }
.mini-c.head { font-weight: 700; }
.mini-c.gain { fill: #00c000; }
.mini-c.neg { fill: #f00018; }
.mini-c.money { fill: #3a6fc4; }

/* downloads shelf */
.downloads { display: flex; align-items: center; height: 112px; flex: none; padding: 0 24px 4px 0; background: #fff; color: #3c4043; }
.dl { display: flex; align-items: center; width: 466px; height: 88px; margin-top: 4px; padding: 0 34px 0 33px; border-right: 1px solid #c8cacd; }
.dl:first-child { width: 473px; padding-left: 40px; }
.dl a { flex: 1; margin-left: 27px; color: inherit; text-decoration: none; font-size: 24px; white-space: nowrap; }
.dl .ic32 { margin-top: -4px; }
.dl button svg { width: 26px; height: 26px; }
.show-all { width: 156px; height: 64px; margin-left: auto; border: 1px solid #dadce0; border-radius: 8px; color: #1967d2; font-size: 24px; font-weight: 500; }
.dl-x { margin-left: 24px; }
.dl-x svg { width: 24px; height: 24px; }

/* taskbar */
.taskbar { display: grid; grid-template-columns: 1fr auto 1fr; height: 96px; flex: none; padding-bottom: 2px; border-top: 2px solid #5b3a3b; background: linear-gradient(90deg, #451213 90%, #3a2017); color: #fff; font-size: 23px; line-height: 32px; }
.widget { display: flex; align-items: center; padding-left: 40px; }
.quote, .clock { display: flex; flex-direction: column; }
.quote { margin-left: 17px; }
.fall { color: #ff99a4; }
.center { display: flex; align-items: center; padding-left: 20px; }
.start svg { width: 46px; height: 46px; }
.search { display: flex; align-items: center; width: 436px; height: 60px; margin: 0 5px 0 29px; padding: 0 3px 0 20px; border-radius: 30px; background: #f4f2f1; }
.lens { width: 32px; height: 32px; }
.search input { flex: 1; margin-left: 20px; font-size: 26px; }
.search input::placeholder { color: #5c5c5c; opacity: 1; }
.case { display: flex; align-items: center; justify-content: center; width: 105px; height: 52px; border-radius: 26px; background: #e2e0e2; }
.case svg { width: 44px; height: 38px; }
.apps { display: flex; }
.apps button { position: relative; width: 88px; height: 92px; }
.apps svg { width: 48px; height: 48px; }
.app-on::before { content: ""; position: absolute; inset: 6px 12px 6px 4px; border-radius: 8px; background: #552627; box-shadow: 2px 0 0 #451213, 9px 0 0 #552627; }
.app-on svg { position: relative; }
.app-on::after, .app-dot::after { content: ""; position: absolute; bottom: 8px; height: 6px; border-radius: 3px; }
.app-on::after { width: 32px; background: #4cc2ff; }
.app-dot::after { width: 12px; background: #a89091; }
.tile-letter { font: 700 19px "Open Sans", sans-serif; fill: #fff; text-anchor: middle; }
.tile-letter.small { font-size: 12px; }
.bb { font: 700 29px Lato, sans-serif; fill: #f0203f; text-anchor: middle; }
.tray { display: flex; align-items: center; justify-content: flex-end; gap: 16px; padding-right: 41px; }
.tray-up { margin-right: 19px; }
.tray-up svg { width: 24px; height: 24px; }
.clock { margin-left: 17px; text-align: right; }
.badge { width: 30px; height: 30px; border-radius: 15px; background: #4cc2ff; color: #000; font-size: 18px; line-height: 30px; text-align: center; }
```
FILE: chart.js
```js
const NS = "http://www.w3.org/2000/svg";

function add(parent, name, attrs, text) {
  const el = document.createElementNS(NS, name);
  for (const key in attrs) el.setAttribute(key, attrs[key]);
  if (text) el.textContent = text;
  parent.appendChild(el);
  return el;
}

const rows = [...document.querySelectorAll("#stats tbody tr")].map(tr => [...tr.cells].map(td => td.textContent));
const sales = rows.map(r => Number(r[1]));

/* main chart */
const chart = document.getElementById("chart");
const left = 132, right = 1314, top0 = 14, bottom = 440;
const yCount = n => 19 + (360 - n) * 2.174;
const yPrice = p => 28 + (2300000 - p) / 100000 * 33.55;
const xYear = i => 213 + i * 56.55;

for (let n = 360; n >= 170; n -= 10) add(chart, "line", { class: "grid", x1: left, x2: right, y1: Math.round(yCount(n)), y2: Math.round(yCount(n)) });
for (let i = -1; i < 20; i++) add(chart, "line", { class: "grid", x1: Math.round(xYear(i)), x2: Math.round(xYear(i)), y1: top0, y2: bottom });
add(chart, "path", { class: "frame", d: `M${left} ${bottom}V${top0}H${right}V${bottom}` });
sales.forEach((n, i) => {
  const y = Math.round(yCount(n));
  if (y < bottom) add(chart, "rect", { class: "bar", x: Math.round(xYear(i) - 25), y, width: 51, height: bottom - y });
});
add(chart, "path", { class: "trend", d: "M1077 440C1088 400 1096 345 1117 305C1130 281 1140 269 1154 266C1166 263 1178 264 1195 259C1208 254 1218 248 1231 243" });
for (let p = 2300000; p >= 1100000; p -= 100000) add(chart, "text", { class: "tick tick-l", x: 127, y: Math.round(yPrice(p)) + 5 }, "$" + p.toLocaleString("en-US"));
for (let n = 360; n >= 170; n -= 10) add(chart, "text", { class: "tick tick-r", x: 1318, y: Math.round(yCount(n)) + 5 }, String(n));
add(chart, "text", { class: "axis", fill: "#3a6fc4", "text-anchor": "end", transform: "translate(30 317) rotate(-90)" }, "Median Sale Price");
add(chart, "text", { class: "axis count", transform: "translate(1357 322) rotate(90)" }, "Number of Sales");

/* preview of the current page */
const mini = document.getElementById("mini");
const ends = [24, 47, 70, 88, 112, 136];
add(mini, "rect", { x: 11, y: 42, width: 129, height: 6, fill: "#dfdfdf" });
["Year", "# Sales", "Median", "Growth", "Low", "High"].forEach((t, c) => add(mini, "text", { class: "mini-c head", x: ends[c], y: 46 }, t));
rows.forEach((r, i) => {
  const y = 48 + i * 5;
  if (i % 2 === 0) add(mini, "rect", { x: 11, y, width: 129, height: 5, fill: "#eff2f7" });
  add(mini, "path", { d: `M11 ${y}H140`, stroke: "#ccc", "stroke-width": 1 });
  r.forEach((t, c) => add(mini, "text", { class: "mini-c" + (c === 3 ? (t[0] === "-" ? " neg" : " gain") : ""), x: ends[c], y: y + 4 }, t));
});
add(mini, "path", { d: "M11 42H140V147H11zM30 48v95M51 48v95M73 48v95M92 48v95M113 48v95", fill: "none", stroke: "#bbb", "stroke-width": 1 });
sales.forEach((n, i) => add(mini, "rect", { class: "bar", x: 38 + i * 7.7, y: 256 - n * 0.296, width: 7, height: n * 0.296 }));
add(mini, "path", { d: "M42 232L54 229L65 226L90 227L105 226L120 219L130 213L145 211L157 206L163 190L168 182L180 178", fill: "none", stroke: "#14c793", "stroke-width": 1 });
for (let i = 0; i < 24; i++) add(mini, "text", { class: "mini-c money", x: 30, y: 152 + i * 4.6 }, "$" + ((23 - i) * 100000).toLocaleString("en-US"));
for (let i = 0; i < 37; i++) add(mini, "text", { class: "mini-c", x: 197, y: 151 + i * 2.95 }, String(360 - i * 10));
for (let i = 0; i < 21; i++) add(mini, "text", { class: "mini-c", transform: `translate(${35 + i * 7.7} 257) rotate(-90)` }, String(2004 + i));
add(mini, "text", { class: "mini-c", x: 125, y: 265 }, "Sale Year (Calendar)");
add(mini, "text", { class: "mini-c money", transform: "translate(17 190) rotate(-90)" }, "Median Sale Price");
add(mini, "text", { class: "mini-c", transform: "translate(199 212) rotate(90)" }, "Number of Sales");
```
